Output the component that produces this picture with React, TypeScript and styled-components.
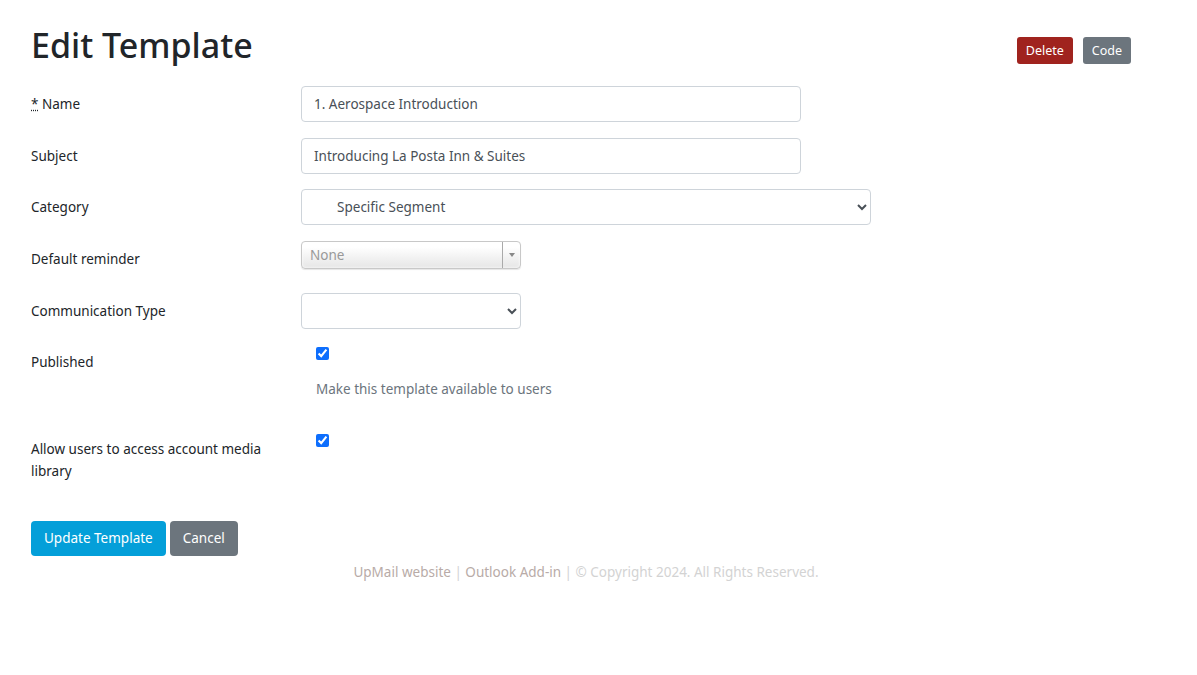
import React, { useState } from 'react';
import styled, { createGlobalStyle } from 'styled-components';

const GlobalStyle = createGlobalStyle`
  html, body {
    margin: 0;
    padding: 0;
    background: #fff;
  }
  body {
    font-family: "Noto Sans", "Open Sans", sans-serif;
    font-size: 13.5px;
    color: #212529;
  }
  * { box-sizing: border-box; }
`;

const Page = styled.div`
  width: 1110px;
  margin-left: 31px;
  padding-top: 25px;
`;

const Header = styled.div`
  display: flex;
  align-items: flex-start;
  justify-content: space-between;
  padding-right: 10px;
  margin-bottom: 20px;
`;

const Title = styled.h1`
  margin: 0;
  font-size: 34px;
  font-weight: 500;
  line-height: 1.2;
`;

const HeaderButtons = styled.div`
  display: flex;
  gap: 10px;
  padding-top: 12px;
`;

const SmallButton = styled.button<{ $bg: string }>`
  border: none;
  border-radius: 3px;
  background: ${(p) => p.$bg};
  color: #fff;
  font-family: inherit;
  font-size: 12.5px;
  height: 27px;
  padding: 0 9px;
  cursor: pointer;
`;

const Row = styled.div<{ $gap?: number }>`
  display: grid;
  grid-template-columns: 270px 1fr;
  align-items: start;
  margin-bottom: ${(p) => p.$gap ?? 16}px;
`;

const Label = styled.label<{ $top?: number }>`
  padding-top: ${(p) => p.$top ?? 7}px;
  line-height: 22px;
  padding-right: 20px;
`;

const Req = styled.abbr`
  text-decoration: underline dotted;
  cursor: help;
`;

const TextInput = styled.input<{ $w: number }>`
  width: ${(p) => p.$w}px;
  height: 36px;
  border: 1px solid #ced4da;
  border-radius: 4px;
  padding: 0 12px;
  font-family: inherit;
  font-size: 13.5px;
  color: #495057;
  outline: none;
`;

const Select = styled.select<{ $w: number }>`
  width: ${(p) => p.$w}px;
  height: 36px;
  border: 1px solid #ced4da;
  border-radius: 4px;
  padding: 0 10px;
  font-family: inherit;
  font-size: 13.5px;
  color: #495057;
  background: #fff;
  outline: none;
`;

const Chosen = styled.div`
  position: relative;
  width: 220px;
  height: 28px;
  border: 1px solid #c8c8c8;
  border-radius: 4px;
  background: linear-gradient(#fff 20%, #f2f2f2 60%, #e6e6e6 100%);
  box-shadow: 0 0 3px #fff inset, 0 1px 1px rgba(0, 0, 0, 0.1);
  display: flex;
  align-items: center;
  padding-left: 8px;
  color: #999;
  font-size: 13.5px;
`;

const ChosenArrow = styled.div`
  position: absolute;
  right: 0;
  top: 0;
  bottom: 0;
  width: 18px;
  border-left: 1px solid #aaa;
  display: flex;
  align-items: center;
  justify-content: center;
  &::after {
    content: '';
    border-left: 3px solid transparent;
    border-right: 3px solid transparent;
    border-top: 4px solid #888;
  }
`;

const CheckCol = styled.div`
  padding-left: 15px;
  padding-top: 2px;
`;

const Check = styled.input`
  width: 13px;
  height: 13px;
  margin: 0;
  accent-color: #0d6efd;
  display: block;
`;

const Help = styled.div`
  color: #6c757d;
  margin-top: 18px;
  line-height: 22px;
`;

const Actions = styled.div`
  display: flex;
  gap: 4px;
  margin-top: 39px;
`;

const Button = styled.button<{ $bg: string }>`
  border: none;
  border-radius: 4px;
  background: ${(p) => p.$bg};
  color: #fff;
  font-family: inherit;
  font-size: 13.5px;
  height: 35px;
  padding: 0 13px;
  cursor: pointer;
`;

const Footer = styled.div`
  text-align: center;
  margin-top: 6px;
  line-height: 20px;
  color: #d3d3d3;
  font-size: 13.5px;
`;

const FooterLink = styled.a`
  color: #b8aba7;
  text-decoration: none;
`;

export default function App() {
  const [name, setName] = useState('1. Aerospace Introduction');
  const [subject, setSubject] = useState('Introducing La Posta Inn & Suites');
  const [published, setPublished] = useState(true);
  const [media, setMedia] = useState(true);

  return (
    <>
      <GlobalStyle />
      <Page>
        <Header>
          <Title>Edit Template</Title>
          <HeaderButtons>
            <SmallButton $bg="#a0231e">Delete</SmallButton>
            <SmallButton $bg="#6c757d">Code</SmallButton>
          </HeaderButtons>
        </Header>

        <Row>
          <Label>
            <Req title="required">*</Req> Name
          </Label>
          <TextInput $w={500} value={name} onChange={(e) => setName(e.currentTarget.value)} />
        </Row>
        <Row $gap={15}>
          <Label>Subject</Label>
          <TextInput $w={500} value={subject} onChange={(e) => setSubject(e.currentTarget.value)} />
        </Row>
        <Row>
          <Label>Category</Label>
          <Select $w={570} defaultValue="seg">
            <option value="seg">&nbsp;&nbsp;&nbsp;&nbsp;&nbsp;&nbsp;Specific Segment</option>
          </Select>
        </Row>
        <Row $gap={23}>
          <Label $top={7}>Default reminder</Label>
          <Chosen>
            None
            <ChosenArrow />
          </Chosen>
        </Row>
        <Row>
          <Label>Communication Type</Label>
          <Select $w={220} defaultValue="">
            <option value=""></option>
          </Select>
        </Row>
        <Row $gap={32}>
          <Label $top={6}>Published</Label>
          <CheckCol>
            <Check type="checkbox" checked={published} onChange={() => setPublished(!published)} />
            <Help>Make this template available to users</Help>
          </CheckCol>
        </Row>
        <Row $gap={0}>
          <Label $top={6}>Allow users to access account media library</Label>
          <CheckCol>
            <Check type="checkbox" checked={media} onChange={() => setMedia(!media)} />
          </CheckCol>
        </Row>

        <Actions>
          <Button $bg="#049fd9">Update Template</Button>
          <Button $bg="#6c757d">Cancel</Button>
        </Actions>

        <Footer>
          <FooterLink href="#">UpMail website</FooterLink> | <FooterLink href="#">Outlook Add-in</FooterLink> | © Copyright 2024. All Rights Reserved.
        </Footer>
      </Page>
    </>
  );
}
